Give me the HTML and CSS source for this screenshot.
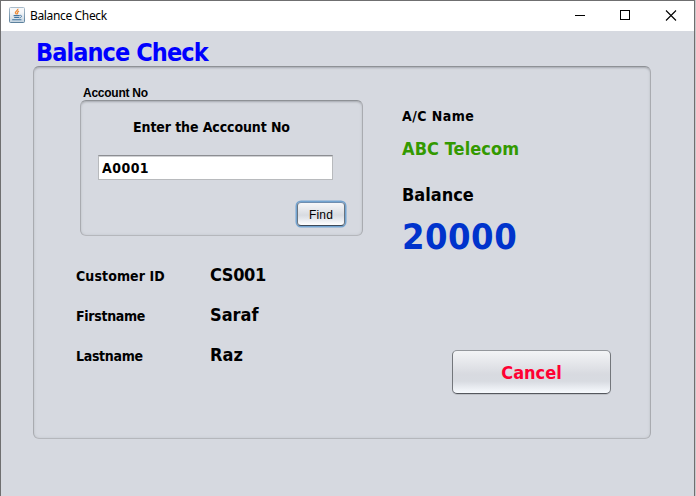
FILE: index.html
```html
<!DOCTYPE html>
<html lang="en">
<head>
<meta charset="utf-8">
<title>Balance Check</title>
<link rel="stylesheet" href="styles.css">
</head>
<body>
<div class="window">
  <header class="titlebar">
    <svg class="app-icon" width="16" height="16" viewBox="0 0 16 16">
      <defs>
        <linearGradient id="edge" x2="0" y2="1"><stop offset="0" stop-color="#a9bccb"/><stop offset="1" stop-color="#5c819d"/></linearGradient>
        <linearGradient id="face" x2="0" y2="1"><stop offset="0.3" stop-color="#f6f8fa"/><stop offset="1" stop-color="#c3d2de"/></linearGradient>
      </defs>
      <rect x=".5" y=".5" width="15" height="15" rx="1" fill="url(#face)" stroke="url(#edge)"/>
      <path d="M8.8 1.8C9.4 3.6 5.8 4.2 6.4 5.9L7.6 7.4M10 4.2C8.4 5 8 5.8 8.8 7.3" fill="none" stroke="#ec8b38" stroke-width="1.3"/>
      <path d="M4.6 8.6h6M5.2 10.5h4.8M3.2 12.7h9.2" fill="none" stroke="#3f73a0" stroke-width="1.1"/>
      <path d="M10.6 8.4c2.8-.4 2.4 2-.2 2.5" fill="none" stroke="#3f73a0" stroke-width=".9"/>
    </svg>
    <span class="caption">Balance Check</span>
    <svg class="controls" width="137" height="30" viewBox="0 0 137 30" fill="none" stroke="#000" shape-rendering="crispEdges">
      <path d="M18 14.5h10"/><rect x="63.5" y="9.5" width="9" height="9"/>
      <path d="M109 9.5l10 10M119 9.5l-10 10" shape-rendering="auto" stroke-width="1.1"/>
    </svg>
  </header>
  <main class="content">
    <h1 class="heading">Balance Check</h1>
    <section class="panel sunken">
      <div class="left">
        <div class="group-title">Account No</div>
        <div class="group sunken">
          <label class="prompt" for="acc">Enter the Acccount No</label>
          <input class="field" id="acc" value="A0001">
          <button class="find">Find</button>
        </div>
        <dl class="details">
          <dt class="wider">Customer ID</dt><dd class="tighter">CS001</dd>
          <dt class="tight">Firstname</dt><dd>Saraf</dd>
          <dt class="tight">Lastname</dt><dd>Raz</dd>
        </dl>
      </div>
      <div class="right">
        <div class="ac-label">A/C Name</div>
        <div class="ac-name">ABC Telecom</div>
        <div class="bal-label">Balance</div>
        <div class="bal-value">20000</div>
        <button class="cancel">Cancel</button>
      </div>
    </section>
  </main>
</div>
</body>
</html>
```
FILE: styles.css
```css
* { box-sizing: border-box; }
body {
  margin: 0;
  width: 696px;
  height: 496px;
  overflow: hidden;
  background: #c9c9cb;
  font-family: "DejaVu Sans Condensed", "DejaVu Sans", sans-serif;
  font-stretch: condensed;
  font-weight: bold;
  color: #000;
  white-space: nowrap;
}
.window {
  width: 695px;
  height: 496px;
  border: solid #6f6f70;
  border-width: 1px 1px 0;
  background: #d6d9e0;
}
.titlebar {
  display: flex;
  height: 30px;
  padding-left: 8px;
  background: #fff;
}
.app-icon { margin-top: 6px; }
.caption {
  margin-left: 5px;
  font: 12px/30px "Noto Sans", sans-serif;
  letter-spacing: -0.35px;
}
.controls { margin-left: auto; }
.content { padding: 5px 0 0 32px; }
.heading {
  margin: 0 0 0 3px;
  height: 30px;
  font-size: 25px;
  line-height: 33px;
  color: #00f;
  letter-spacing: -0.92px;
}
.sunken {
  border: 1px solid;
  border-color: #8e9196 #a9abb0 #b5b7bc;
  border-radius: 6px;
  box-shadow: inset 0 2px 2px -1px #a9acb2, inset 0 0 3px #c2c5cb;
}
.panel {
  display: flex;
  width: 618px;
  height: 373px;
}
.left { width: 329px; padding: 18px 0 0 46px; margin-right: 39px; }
.group-title {
  height: 15px;
  padding-left: 3px;
  font: bold 12px/17px "Liberation Sans", sans-serif;
  letter-spacing: -0.25px;
}
.group {
  display: flex;
  flex-direction: column;
  width: 283px;
  height: 136px;
  padding: 16px 17px 0 17px;
}
.prompt {
  padding-left: 35px;
  font-size: 14px;
  line-height: 20px;
  letter-spacing: -0.1px;
}
.field {
  width: 235px;
  height: 25px;
  margin-top: 18px;
  padding: 1px 3px 0;
  border: 1px solid #b8babd;
  border-top-color: #8c8e92;
  background: #fff;
  box-shadow: inset 0 1px 0 #d0d1d4;
  font: inherit;
  font-size: 14px;
  letter-spacing: 0.45px;
  color: #000;
}
.find {
  align-self: flex-end;
  width: 48px;
  height: 24px;
  margin-top: 22px;
  padding: 0;
  border: 1px solid;
  border-color: #6f8daf #68737f #3e4a59;
  border-radius: 4px;
  background: linear-gradient(#f6f7f9, #d8dbe1 55%, #e1e4ea 68%, #fff);
  box-shadow: 0 0 0 1.5px #73a4d1;
  font: 12px "Liberation Sans", sans-serif;
  letter-spacing: 0.2px;
  line-height: 24px;
  color: #000;
}
.details {
  display: grid;
  grid-template-columns: 134px auto;
  grid-auto-rows: 40px;
  margin: 20px 0 0 -4px;
}
.details dt { font-size: 14px; line-height: 40px; }
.details dd { margin: 0; font-size: 18px; line-height: 38px; }
.details .wider { letter-spacing: 0.1px; }
.details .tight { letter-spacing: -0.3px; }
.details .tighter { letter-spacing: -0.35px; }
.right {
  display: flex;
  flex-direction: column;
  padding-top: 39px;
}
.ac-label { font-size: 14px; line-height: 20px; letter-spacing: 0.45px; }
.ac-name { margin-top: 11px; font-size: 18px; line-height: 24px; letter-spacing: 0.1px; color: #390; }
.bal-label { margin-top: 22px; font-size: 18px; line-height: 24px; }
.bal-value { margin-top: 10px; font-size: 36px; line-height: 40px; letter-spacing: 0.5px; color: #03c; }
.cancel {
  width: 159px;
  height: 44px;
  margin: 93px 0 0 50px;
  padding: 0;
  border: 1px solid;
  border-color: #94979c #73767b #55585e;
  border-radius: 5px;
  background: linear-gradient(#f3f4f6, #d8dae0 55%, #d8dbe1 72%, #f8fbff);
  box-shadow: 0 1px 0 #bfc2c8;
  font: inherit;
  font-size: 18px;
  color: #ff0033;
}
```
